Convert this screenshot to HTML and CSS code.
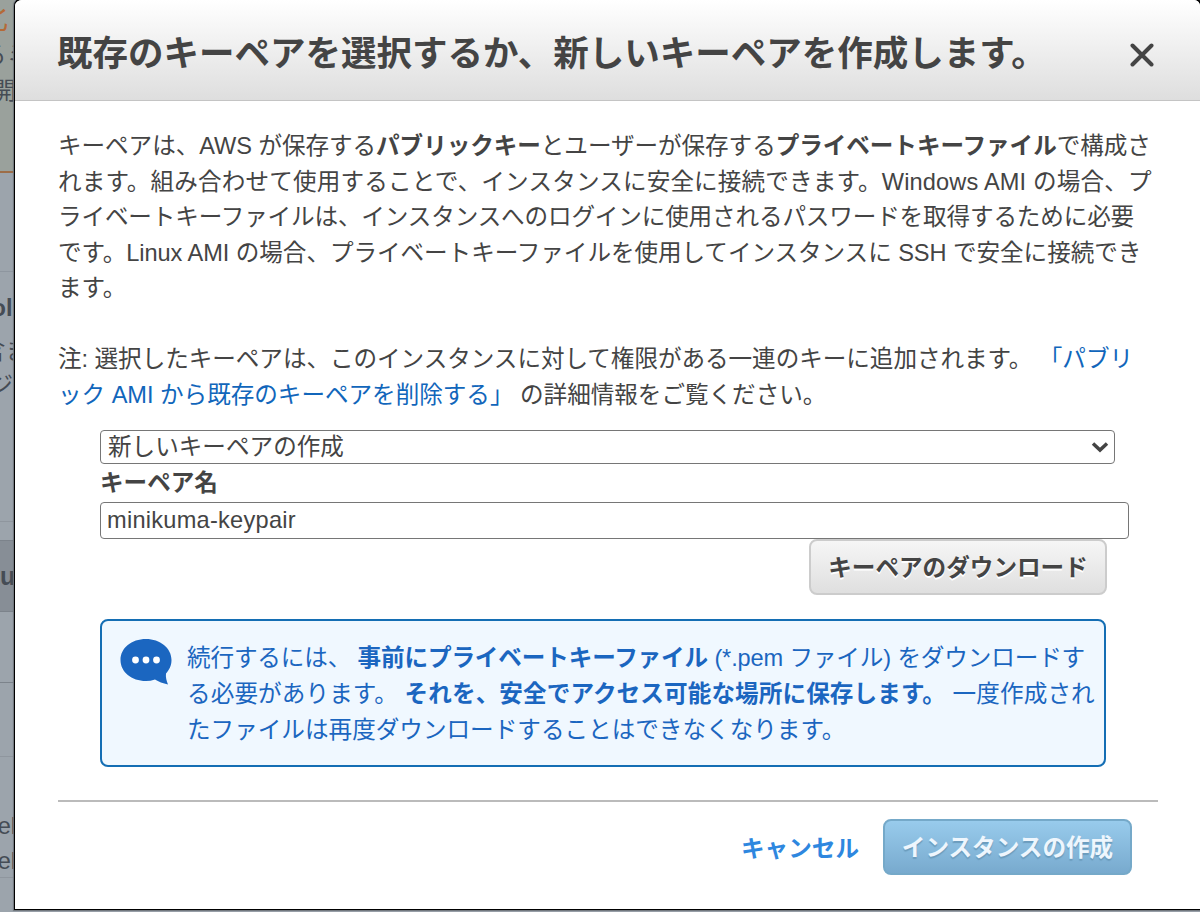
FILE: index.html
```
<!DOCTYPE html>
<html lang="ja">
<head>
    <meta charset="UTF-8">
    <meta name="viewport" content="width=device-width, initial-scale=1.0">
    <title>キーペアの選択</title>
    <link rel="stylesheet" href="styles.css">
</head>
<body>

    <div class="page">
        <div class="backdrop" aria-hidden="true">
            <div class="bg-banner"><p class="bg-title">化</p><p class="bg-old">るミ</p><p class="bg-open">開</p></div>
            <div class="bg-gap"></div>
            <div class="bg-volume"><p class="bg-bold">olu</p><p class="bg-jp">含ま</p><p class="bg-jp2">ジ</p></div>
            <div class="bg-space"></div>
            <div class="bg-head">u</div>
            <div class="bg-row1"></div>
            <div class="bg-row2"></div>
            <div class="bg-row3"><p>el</p><p>el</p></div>
        </div>

        <div class="modal">
            <div class="modal-header">
                <h2>既存のキーペアを選択するか、新しいキーペアを作成します。</h2>
                <svg class="close" viewBox="0 0 24 24"><path d="M2.5 2.5 L21.5 21.5 M21.5 2.5 L2.5 21.5"/></svg>
            </div>

            <div class="modal-body">
                <p class="text">
                    <span class="line l1">キーペアは、AWS が保存する<b>パブリックキー</b>とユーザーが保存する<b>プライベートキーファイル</b>で構成さ</span>
                    <span class="line l2">れます。組み合わせて使用することで、インスタンスに安全に接続できます。Windows AMI の場合、プ</span>
                    <span class="line l3">ライベートキーファイルは、インスタンスへのログインに使用されるパスワードを取得するために必要</span>
                    <span class="line l4">です。Linux AMI の場合、プライベートキーファイルを使用してインスタンスに SSH で安全に接続でき</span>
                    <span class="line">ます。</span>
                </p>
                <p class="text note">
                    <span class="line l6">注: 選択したキーペアは、このインスタンスに対して権限がある一連のキーに追加されます。 <a>「パブリ</a></span>
                    <span class="line l7"><a>ック AMI から既存のキーペアを削除する」</a> の詳細情報をご覧ください。</span>
                </p>

                <div class="form">
                    <div class="select">
                        <span>新しいキーペアの作成</span>
                        <svg viewBox="0 0 18 12"><path d="M2 2.5 L9 9 L16 2.5"/></svg>
                    </div>
                    <label for="keyName">キーペア名</label>
                    <input type="text" id="keyName" value="minikuma-keypair">
                    <button class="btn download">キーペアのダウンロード</button>

                    <div class="info">
                        <svg class="bubble" viewBox="0 0 52 46">
                            <path d="M26 0 C40 0 51.5 9 51.5 21 C51.5 27 49 31 46 34.5 C45.5 38 46.5 42 48 45.5 C43 44.5 38.5 42.5 35 40.5 C32 41.5 29 42 26 42 C11.5 42 0.5 33 0.5 21 C0.5 9 11.5 0 26 0 Z"/>
                            <circle cx="15.5" cy="21" r="3.4"/>
                            <circle cx="26" cy="21" r="3.4"/>
                            <circle cx="36.5" cy="21" r="3.4"/>
                        </svg>
                        <p>
                            <span class="line i1">続行するには、 <b>事前にプライベートキーファイル</b> (*.pem ファイル) をダウンロードす</span>
                            <span class="line i2">る必要があります。 <b>それを、安全でアクセス可能な場所に保存します。</b> 一度作成され</span>
                            <span class="line">たファイルは再度ダウンロードすることはできなくなります。</span>
                        </p>
                    </div>
                </div>
            </div>

            <div class="modal-footer">
                <a class="cancel">キャンセル</a>
                <button class="btn launch">インスタンスの作成</button>
            </div>
        </div>
    </div>

</body>
</html>
```
FILE: styles.css
```
* {
    box-sizing: border-box;
}

body {
    margin: 0;
    background-color: #9ca4ac;
    color: #444;
    font-family: "Liberation Sans", "Noto Sans CJK JP", sans-serif;
    font-size: 23.6px;
    overflow: hidden;
}

p, h2 {
    margin: 0;
}

.page {
    display: flex;
    width: 1202px;
    height: 912px;
}

/* page behind the dialog */
.backdrop {
    flex: 0 0 14px;
    overflow: hidden;
    white-space: nowrap;
    color: #454c55;
}

.backdrop p {
    display: flex;
    justify-content: flex-end;
}

.bg-banner {
    height: 173px;
    background-color: #9aa19c;
    border-bottom: 2px solid #9d6d48;
}

.backdrop .bg-title {
    height: 38px;
    line-height: 36px;
    font-size: 30px;
    color: #b46a37;
    margin-right: 6px;
}

.backdrop .bg-old {
    height: 35px;
    line-height: 34px;
    margin-right: -16px;
}

.backdrop .bg-open {
    line-height: 36px;
    margin-right: -2px;
}

.bg-gap {
    height: 99px;
    border-bottom: 1px solid #8e969f;
}

.bg-volume {
    height: 250px;
    padding-top: 18px;
    border-bottom: 1px solid #8f969e;
}

.backdrop .bg-bold {
    height: 44px;
    line-height: 36px;
    font-weight: bold;
    margin-right: -13px;
}

.backdrop .bg-jp {
    height: 34px;
    line-height: 34px;
    margin-right: -15px;
}

.backdrop .bg-jp2 {
    line-height: 34px;
    margin-right: 1px;
}

.bg-space {
    height: 18px;
}

.bg-head {
    height: 72px;
    line-height: 70px;
    background-color: #878e96;
    border-top: 1px solid #7c838b;
    border-bottom: 1px solid #7c838b;
    font-size: 25px;
    font-weight: bold;
}

.bg-row1 {
    height: 71px;
    border-bottom: 1px solid #7c838b;
}

.bg-row2 {
    height: 74px;
    border-bottom: 1px solid #8f969e;
}

.bg-row3 {
    height: 121px;
    padding-top: 52px;
    line-height: 35px;
    border-bottom: 1px solid #8f969e;
}

.backdrop .bg-row3 p {
    margin-right: -2px;
}

/* dialog */
.modal {
    flex: 1;
    height: 912px;
    margin-top: -2px;
    background-color: #fff;
    border: 2px solid #000;
    border-bottom-width: 1px;
    border-left-width: 1px;
    border-radius: 8px 8px 0 0;
    box-shadow: 0 0 1px 1px #6f757b;
    overflow: hidden;
}

.modal-header {
    display: flex;
    align-items: center;
    height: 101px;
    padding: 8px 46px 0 42px;
    background: linear-gradient(#fff, #dedede);
    border-bottom: 1px solid #c4c4c4;
}

.modal-header h2 {
    flex: 1;
    font-size: 35.5px;
    line-height: 50px;
    white-space: nowrap;
}

.close {
    width: 24px;
    height: 24px;
    margin-top: 2px;
    fill: none;
    stroke: #444;
    stroke-width: 4;
    stroke-linecap: round;
}

.modal-body {
    height: 701px;
    margin: 0 42px 0 43px;
    padding-top: 28px;
    border-bottom: 2px solid #bbb;
}

.text {
    line-height: 35.6px;
}

.note {
    margin-top: 35px;
}

.line {
    display: block;
    white-space: nowrap;
}

.l1 { letter-spacing: -0.06px; }
.l2 { letter-spacing: 0.15px; }
.l3 { letter-spacing: -0.15px; }
.l4 { letter-spacing: -0.06px; }
.l6 { letter-spacing: -0.05px; }
.l7 { letter-spacing: -0.03px; }
.i1 { letter-spacing: -0.14px; }
.i2 { letter-spacing: 0.1px; }

.text a {
    color: #1166bb;
}

.form {
    display: flex;
    flex-direction: column;
    padding: 17px 0 0 42px;
}

.select {
    display: flex;
    align-items: center;
    justify-content: space-between;
    width: 1015px;
    height: 34px;
    padding: 0 5px 0 7px;
    border: 1.5px solid #767676;
    border-radius: 4px;
    line-height: 30px;
}

.select svg {
    width: 18px;
    height: 12px;
    fill: none;
    stroke: #444;
    stroke-width: 3.5;
}

.form label {
    height: 38px;
    line-height: 39px;
    font-weight: bold;
}

.form input {
    width: 1029px;
    height: 37px;
    padding: 0 6px;
    border: 1.5px solid #767676;
    border-radius: 4px;
    color: #444;
    font: inherit;
    letter-spacing: 0.25px;
}

.btn {
    height: 56px;
    padding: 0;
    border-radius: 8px;
    font: inherit;
    font-weight: bold;
    white-space: nowrap;
}

.download {
    width: 298px;
    padding-bottom: 3px;
    margin-left: 709px;
    color: #444;
    background: linear-gradient(#f6f6f6, #dfdfdf);
    border: 2px solid #ccc;
    text-shadow: 0 2px 0 #fff;
}

.info {
    display: flex;
    width: 1006px;
    height: 148px;
    margin-top: 24px;
    padding: 18px;
    background-color: #f0f8ff;
    border: 2px solid #146eb4;
    border-radius: 8px;
    color: #1b66c0;
    line-height: 36px;
}

.info p {
    padding-top: 1px;
}

.bubble {
    flex: none;
    width: 52px;
    height: 46px;
    margin-right: 15px;
    fill: #1b66c0;
}

.bubble circle {
    fill: #fff;
}

.modal-footer {
    display: flex;
    justify-content: flex-end;
    align-items: center;
    gap: 24px;
    padding: 17px 68px 0 0;
}

.cancel {
    color: #2e87df;
    font-weight: bold;
}

.launch {
    width: 249px;
    padding-bottom: 2px;
    color: #eef6fd;
    background: linear-gradient(#98cbec, #78aace);
    border: 2px solid #75a9c9;
    text-shadow: 0 2px 1px #6b9cbd;
}
```
